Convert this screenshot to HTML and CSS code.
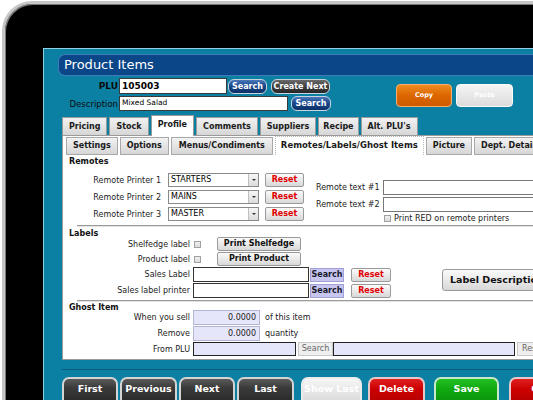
FILE: index.html
```html
<!DOCTYPE html>
<html>
<head>
<meta charset="utf-8">
<link rel="stylesheet" href="styles.css">
</head>
<body>
<div class="device">
  <div class="screen">
    <div class="titlebar">Product Items</div>
    <div class="head">
      <div class="hform">
        <div class="hrow">
          <span class="hlabel strong">PLU</span>
          <div class="hinput plu">105003</div>
          <span class="pill pill-blue w-s1">Search</span>
          <span class="pill pill-gray w-cn">Create Next</span>
        </div>
        <div class="hrow">
          <span class="hlabel">Description</span>
          <div class="hinput desc">Mixed Salad</div>
          <span class="pill pill-blue w-s2">Search</span>
        </div>
      </div>
      <div class="clip">
        <span class="cbtn copy">Copy</span>
        <span class="cbtn paste">Paste</span>
      </div>
    </div>
    <div class="tabs">
      <span class="tab">Pricing</span>
      <span class="tab">Stock</span>
      <span class="tab active">Profile</span>
      <span class="tab">Comments</span>
      <span class="tab">Suppliers</span>
      <span class="tab narrow">Recipe</span>
      <span class="tab">Alt. PLU's</span>
    </div>
    <div class="panel">
      <div class="subtabs">
        <span class="stab">Settings</span>
        <span class="stab">Options</span>
        <span class="stab wide">Menus/Condiments</span>
        <span class="stab active">Remotes/Labels/Ghost Items</span>
        <span class="stab">Picture</span>
        <span class="stab">Dept. Details</span>
      </div>

      <div class="sec">
        <div class="sec-title">Remotes</div>
        <div class="remotes">
          <div class="rcol">
            <div class="rrow">
              <span class="rlabel">Remote Printer 1</span>
              <span class="select"><span class="sval">STARTERS</span><span class="sarrow"></span></span>
              <span class="reset">Reset</span>
            </div>
            <div class="rrow">
              <span class="rlabel">Remote Printer 2</span>
              <span class="select"><span class="sval">MAINS</span><span class="sarrow"></span></span>
              <span class="reset">Reset</span>
            </div>
            <div class="rrow">
              <span class="rlabel">Remote Printer 3</span>
              <span class="select"><span class="sval">MASTER</span><span class="sarrow"></span></span>
              <span class="reset">Reset</span>
            </div>
          </div>
          <div class="tcol">
            <div class="trow"><span class="tlabel">Remote text #1</span><span class="tinput"></span></div>
            <div class="trow"><span class="tlabel">Remote text #2</span><span class="tinput"></span></div>
            <div class="crow"><span class="check"></span><span>Print RED on remote printers</span></div>
          </div>
        </div>
        <div class="sep"></div>

        <div class="sec-title t2">Labels</div>
        <div class="labels">
          <div class="lgrid">
            <span class="glabel">Shelfedge label</span>
            <span class="gcell"><span class="check"></span><span class="pbtn">Print Shelfedge</span></span>
            <span class="glabel">Product label</span>
            <span class="gcell"><span class="check"></span><span class="pbtn">Print Product</span></span>
            <span class="glabel">Sales Label</span>
            <span class="gcell"><span class="winput"></span><span class="lsearch">Search</span><span class="reset r2">Reset</span></span>
            <span class="glabel">Sales label printer</span>
            <span class="gcell"><span class="winput"></span><span class="lsearch">Search</span><span class="reset r2">Reset</span></span>
          </div>
          <span class="ldesc">Label Description</span>
        </div>
        <div class="sep s2"></div>

        <div class="sec-title t3">Ghost Item</div>
        <div class="ggrid">
          <span class="glabel">When you sell</span>
          <span class="gcell"><span class="linput num">0.0000</span><span class="after">of this item</span></span>
          <span class="glabel">Remove</span>
          <span class="gcell"><span class="linput num">0.0000</span><span class="after">quantity</span></span>
          <span class="glabel">From PLU</span>
          <span class="gcell"><span class="linput ink plu2"></span><span class="gsearch">Search</span><span class="linput ink long"></span><span class="gsearch re">Reset</span></span>
        </div>
      </div>
    </div>
    <div class="nav">
      <span class="nbtn nb-dark w56">First</span>
      <span class="nbtn nb-dark w57 g2">Previous</span>
      <span class="nbtn nb-dark w56 g2">Next</span>
      <span class="nbtn nb-dark w57 g2">Last</span>
      <span class="nbtn nb-light w61 g7">Show Last</span>
      <span class="nbtn nb-red w57 g6">Delete</span>
      <span class="nbtn nb-green w65 g9">Save</span>
      <span class="nbtn nb-red w80 g10">Cancel</span>
    </div>
  </div>
</div>
</body>
</html>
```
FILE: styles.css
```css
* { box-sizing: border-box; }
html, body { margin: 0; padding: 0; }
body {
  width: 533px;
  height: 400px;
  overflow: hidden;
  background: #fff;
  font-family: "DejaVu Sans", Verdana, sans-serif;
  font-size: 8px;
  color: #111;
}
.device {
  margin: 1px 0 0 2px;
  width: 640px;
  height: 430px;
  background: #000;
  border-top: 3px solid #c6c6c6;
  border-left: 3px solid #c6c6c6;
  border-top-left-radius: 30px;
  padding: 44px 0 0 38px;
  box-shadow: inset 1px 1px 0 #7a7a7a;
}
.screen {
  height: 100%;
  background: #0b80a3;
  border-top: 1px solid #8fd0e2;
  border-left: 1px solid #8fd0e2;
  padding-top: 5px;
}
.titlebar {
  margin-left: 14px;
  height: 22px;
  background: #0b4689;
  border: 1px solid #3f7bbb;
  border-right: none;
  border-radius: 7px 0 0 7px;
  color: #fff;
  font-size: 13px;
  line-height: 20px;
  padding-left: 5px;
}
.head { display: flex; margin: 2px 0 0 18px; }
.hform { display: flex; flex-direction: column; gap: 2px; }
.hrow { display: flex; align-items: center; }
.hlabel { width: 56px; margin-right: 1px; text-align: right; font-size: 8.5px; color: #0a0a0a; }
.hlabel.strong { font-weight: bold; font-size: 9px; }
.hinput {
  background: #fff;
  border: 1px solid #3a3a3a;
  padding-left: 2px;
  color: #000;
}
.hinput.plu { width: 108px; height: 16px; font-weight: bold; font-size: 9px; line-height: 14px; }
.hinput.desc { width: 169px; height: 15px; font-size: 7.5px; line-height: 12px; }
.pill {
  height: 15px;
  border-radius: 6px;
  color: #fff;
  font-weight: bold;
  font-size: 8px;
  line-height: 13px;
  text-align: center;
  border: 1px solid #c8d4e0;
}
.pill-blue { background: linear-gradient(#4a78b8 0%, #1b4a8e 45%, #0c2f66 100%); }
.pill-gray { background: linear-gradient(#6a6a6a 0%, #444 45%, #262626 100%); }
.w-s1 { width: 39px; margin-left: 1px; }
.w-cn { width: 59px; margin-left: 4px; }
.w-s2 { width: 40px; margin-left: 3px; }
.clip { display: flex; gap: 4px; margin: 6px 0 0 65px; }
.cbtn {
  height: 23px;
  border-radius: 4px;
  color: #fff;
  font-weight: bold;
  font-size: 6.5px;
  line-height: 21px;
  text-align: center;
}
.copy { width: 56px; background: linear-gradient(#f08a20, #dc6600 50%, #cc5a00); border: 1px solid #f5b070; }
.paste { width: 57px; background: linear-gradient(#f4f4f4, #dcdcdc); border: 1px solid #fafafa; }

.tabs {
  display: flex;
  align-items: flex-end;
  gap: 2px;
  height: 20px;
  margin: 4px 0 0 18px;
  position: relative;
  z-index: 1;
}
.tab {
  height: 18px;
  padding: 0 6px;
  background: linear-gradient(#f2f2f2, #d6d6d6);
  border: 1px solid #9a9a9a;
  border-bottom: none;
  font-weight: bold;
  font-size: 8px;
  line-height: 17px;
  color: #1a1a1a;
}
.tab.narrow { padding: 0 4px; }
.tab.active {
  height: 21px;
  margin-bottom: -1px;
  background: #fff;
  line-height: 18px;
}
.panel {
  margin-left: 18px;
  background: #fff;
  border: 1px solid #9a9a9a;
  padding: 1px 0 1px 0;
  height: 225px;
}
.subtabs { display: flex; align-items: flex-end; gap: 2px; height: 18px; padding-left: 3px; }
.stab {
  height: 18px;
  padding: 0 6px;
  background: linear-gradient(#f2f2f2, #d6d6d6);
  border: 1px solid #a8a8a8;
  font-weight: bold;
  font-size: 8px;
  line-height: 16px;
  color: #1a1a1a;
  white-space: nowrap;
}
.stab.wide { padding: 0 7px; }
.stab.active {
  height: 19px;
  background: #fff;
  border: 1px dotted #b8b8b8;
  border-bottom: none;
  font-size: 8.5px;
  padding: 0 5px;
}
.sec { padding-left: 6px; }
.sec-title { font-weight: bold; font-size: 8px; line-height: 11px; margin-top: 1px; color: #111; }
.sec-title.t2 { line-height: 9px; margin-top: 2px; }
.sec-title.t3 { line-height: 9px; margin-top: 1px; }

.remotes { display: flex; margin-top: 6px; }
.rcol { display: flex; flex-direction: column; gap: 3px; }
.rrow { display: flex; align-items: center; height: 14px; }
.rlabel { width: 92px; margin-right: 7px; text-align: right; color: #222; }
.select {
  display: flex;
  width: 91px;
  height: 14px;
  border: 1px solid #8a8a8a;
  background: #fff;
}
.sval { flex: 1; padding-left: 2px; line-height: 12px; color: #000; }
.sarrow {
  width: 10px;
  background: linear-gradient(#f6f6f6, #dcdcdc);
  border-left: 1px solid #c0c0c0;
  position: relative;
}
.sarrow::after {
  content: "";
  position: absolute;
  left: 3px;
  top: 5px;
  border-left: 2px solid transparent;
  border-right: 2px solid transparent;
  border-top: 2px solid #333;
}
.reset {
  width: 39px;
  height: 14px;
  margin-left: 6px;
  background: linear-gradient(#fbfbfb, #d8d8d8);
  border: 1px solid #9a9a9a;
  border-radius: 2px;
  color: #e00000;
  font-weight: bold;
  text-align: center;
  line-height: 12px;
}
.tcol { margin: 7px 0 0 12px; width: 320px; }
.trow { display: flex; align-items: center; height: 15px; margin-bottom: 2px; }
.tlabel { width: 67px; color: #222; }
.tinput { flex: 1; height: 15px; border: 1px solid #777; background: #fff; }
.crow { display: flex; align-items: center; gap: 3px; margin: 1px 0 0 68px; height: 8px; color: #222; }
.check {
  display: inline-block;
  width: 7px;
  height: 7px;
  border: 1px solid #a0a0a0;
  background: linear-gradient(#f0f0f0, #dadada);
}
.sep {
  margin: 3px 0 0 8px;
  height: 2px;
  border-top: 1px solid #9a9a9a;
  border-bottom: 1px solid #e2e2e2;
}
.sep.s2 { margin-top: 2px; }

.labels { display: flex; margin-top: -1px; }
.lgrid, .ggrid {
  display: grid;
  grid-template-columns: 121px auto;
  column-gap: 3px;
  row-gap: 1px;
}
.lgrid { grid-template-rows: 14px 14px 15px 15px; }
.ggrid { grid-template-rows: 15px 15px 14px; margin-top: -2px; }
.glabel { text-align: right; align-self: center; color: #222; white-space: nowrap; }
.gcell { display: flex; align-items: center; }
.gcell .check { margin: 0 0 0 1px; }
.pbtn {
  width: 84px;
  height: 14px;
  margin-left: 16px;
  background: linear-gradient(#fafafa, #d8d8d8);
  border: 1px solid #999;
  border-radius: 2px;
  font-weight: bold;
  text-align: center;
  line-height: 12px;
  color: #111;
}
.winput { width: 116px; height: 15px; border: 1px solid #333; background: #fff; }
.lsearch {
  width: 34px;
  height: 14px;
  margin-left: 1px;
  background: #c6c6f0;
  border: 1px solid #a0a0d4;
  font-weight: bold;
  text-align: center;
  line-height: 12px;
  color: #1a1a2a;
}
.reset.r2 { width: 40px; margin-left: 7px; }
.ldesc {
  width: 110px;
  height: 22px;
  margin: 32px 0 0 51px;
  background: linear-gradient(#fafafa, #d8d8d8);
  border: 1px solid #999;
  border-radius: 3px;
  font-weight: bold;
  font-size: 9.5px;
  line-height: 20px;
  padding-left: 7px;
  white-space: nowrap;
  color: #111;
}
.linput {
  height: 15px;
  background: #e6e6fa;
  border: 1px solid #b4b4d4;
  color: #222;
}
.linput.num { width: 67px; text-align: right; padding-right: 3px; line-height: 13px; }
.linput.ink { border-color: #222; height: 14px; }
.linput.plu2 { width: 103px; }
.linput.long { width: 182px; }
.after { margin-left: 5px; color: #222; }
.gsearch {
  width: 35px;
  height: 14px;
  margin-left: 2px;
  background: #efefef;
  border: 1px solid #c8c8c8;
  color: #666;
  text-align: center;
  line-height: 12px;
}
.gsearch.re { width: 40px; text-align: left; padding-left: 4px; }

.nav {
  display: flex;
  margin: 9px 0 0 18px;
  border-top: 1px solid #0a5a78;
  padding-top: 7px;
}
.nbtn {
  height: 28px;
  border: 2px solid #d4d4d4;
  border-bottom: none;
  border-radius: 7px 7px 0 0;
  color: #fff;
  font-weight: bold;
  font-size: 9.5px;
  line-height: 20px;
  text-align: center;
  white-space: nowrap;
}
.nb-dark { background: linear-gradient(#5a5a5a 0%, #3a3a3a 35%, #262626 100%); }
.nb-light { background: linear-gradient(#f6f6f6, #d6d6d6); border-color: #ececec; }
.nb-red { background: linear-gradient(#e02020 0%, #cc0000 40%, #b00000 100%); border-color: #e8c8c8; }
.nb-green { background: linear-gradient(#22c022 0%, #10a810 40%, #0a900a 100%); border-color: #c8e8c8; }
.w56 { width: 56px; }
.w57 { width: 57px; }
.w61 { width: 61px; }
.w65 { width: 65px; }
.w80 { width: 80px; }
.g2 { margin-left: 2px; }
.g6 { margin-left: 6px; }
.g7 { margin-left: 7px; }
.g9 { margin-left: 9px; }
.g10 { margin-left: 10px; }
```
